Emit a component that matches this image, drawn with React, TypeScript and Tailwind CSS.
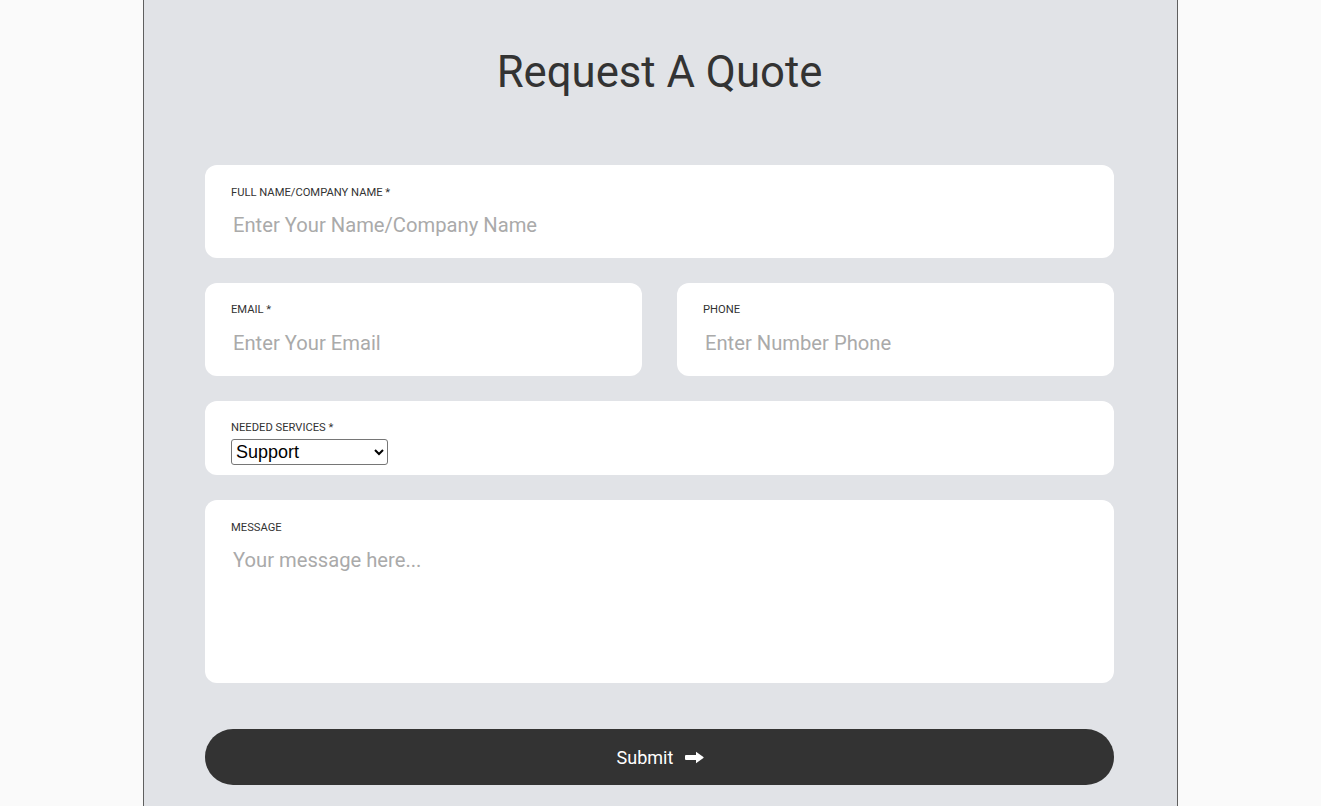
const font = { fontFamily: 'Roboto, "Noto Sans", sans-serif' };

function Label({ children }: { children: React.ReactNode }) {
  return <label className="block text-[11.2px] leading-[14px] uppercase text-[#333]">{children}</label>;
}

function ArrowIcon() {
  return (
    <svg width="19" height="13" viewBox="0 0 19 13" fill="currentColor" aria-hidden="true">
      <rect x="0" y="4" width="12" height="5" rx="1" />
      <path d="M11 0.8 L18.4 6 Q19 6.5 18.4 7 L11 12.2 Z" />
    </svg>
  );
}

export default function App() {
  return (
    <div className="min-h-[806px] bg-[#fafafa]" style={font}>
      <div className="mx-auto min-h-[806px] w-[1035px] border-x border-[#5f5f5f] bg-[#e1e3e7] pl-[61px] pr-[63px] pt-[45px]">
        <h1 className="text-center text-[43.7px] leading-[54px] font-normal text-[#333]">Request A Quote</h1>

        <form className="mt-[66px] flex flex-col gap-[25px]" onSubmit={(e) => e.preventDefault()}>
          <div className="rounded-xl bg-white px-[26px] pt-[21px] pb-[18px]">
            <Label>Full Name/Company Name *</Label>
            <input
              className="mt-[10px] block h-[30px] w-full px-[2px] text-[20.2px] text-[#333] outline-none placeholder:text-[#aaa]"
              placeholder="Enter Your Name/Company Name"
            />
          </div>

          <div className="grid grid-cols-2 gap-[35px]">
            <div className="rounded-xl bg-white px-[26px] pt-5 pb-[18px]">
              <Label>Email *</Label>
              <input
                className="mt-[11px] block h-[30px] w-full px-[2px] text-[20.2px] text-[#333] outline-none placeholder:text-[#aaa]"
                placeholder="Enter Your Email"
              />
            </div>
            <div className="rounded-xl bg-white px-[26px] pt-5 pb-[18px]">
              <Label>Phone</Label>
              <input
                className="mt-[11px] block h-[30px] w-full px-[2px] text-[20.2px] text-[#333] outline-none placeholder:text-[#aaa]"
                placeholder="Enter Number Phone"
              />
            </div>
          </div>

          <div className="rounded-xl bg-white px-[26px] pt-5 pb-[10px]">
            <Label>Needed Services *</Label>
            <select
              defaultValue="Support"
              className="mt-[4px] block h-[26px] w-[157px] rounded-[3px] border border-[#767676] bg-white text-[18px] text-black"
              style={{ fontFamily: '"Liberation Sans", Arial, sans-serif' }}
            >
              <option>Support</option>
              <option>Consulting</option>
              <option>Development</option>
            </select>
          </div>

          <div className="rounded-xl bg-white pl-[26px] pr-[34px] pt-[21px] pb-[10px]">
            <Label>Message</Label>
            <textarea
              className="mt-[12px] block h-[126px] w-full resize-none px-[2px] text-[20.2px] leading-[26px] text-[#333] outline-none placeholder:text-[#aaa]"
              placeholder="Your message here..."
            />
          </div>

          <button
            type="submit"
            className="mt-[21px] flex h-[56px] w-full items-center justify-center gap-3 rounded-full bg-[#333] pl-[2px] text-[18px] text-white"
          >
            <span>Submit</span>
            <ArrowIcon />
          </button>
        </form>
      </div>
    </div>
  );
}
